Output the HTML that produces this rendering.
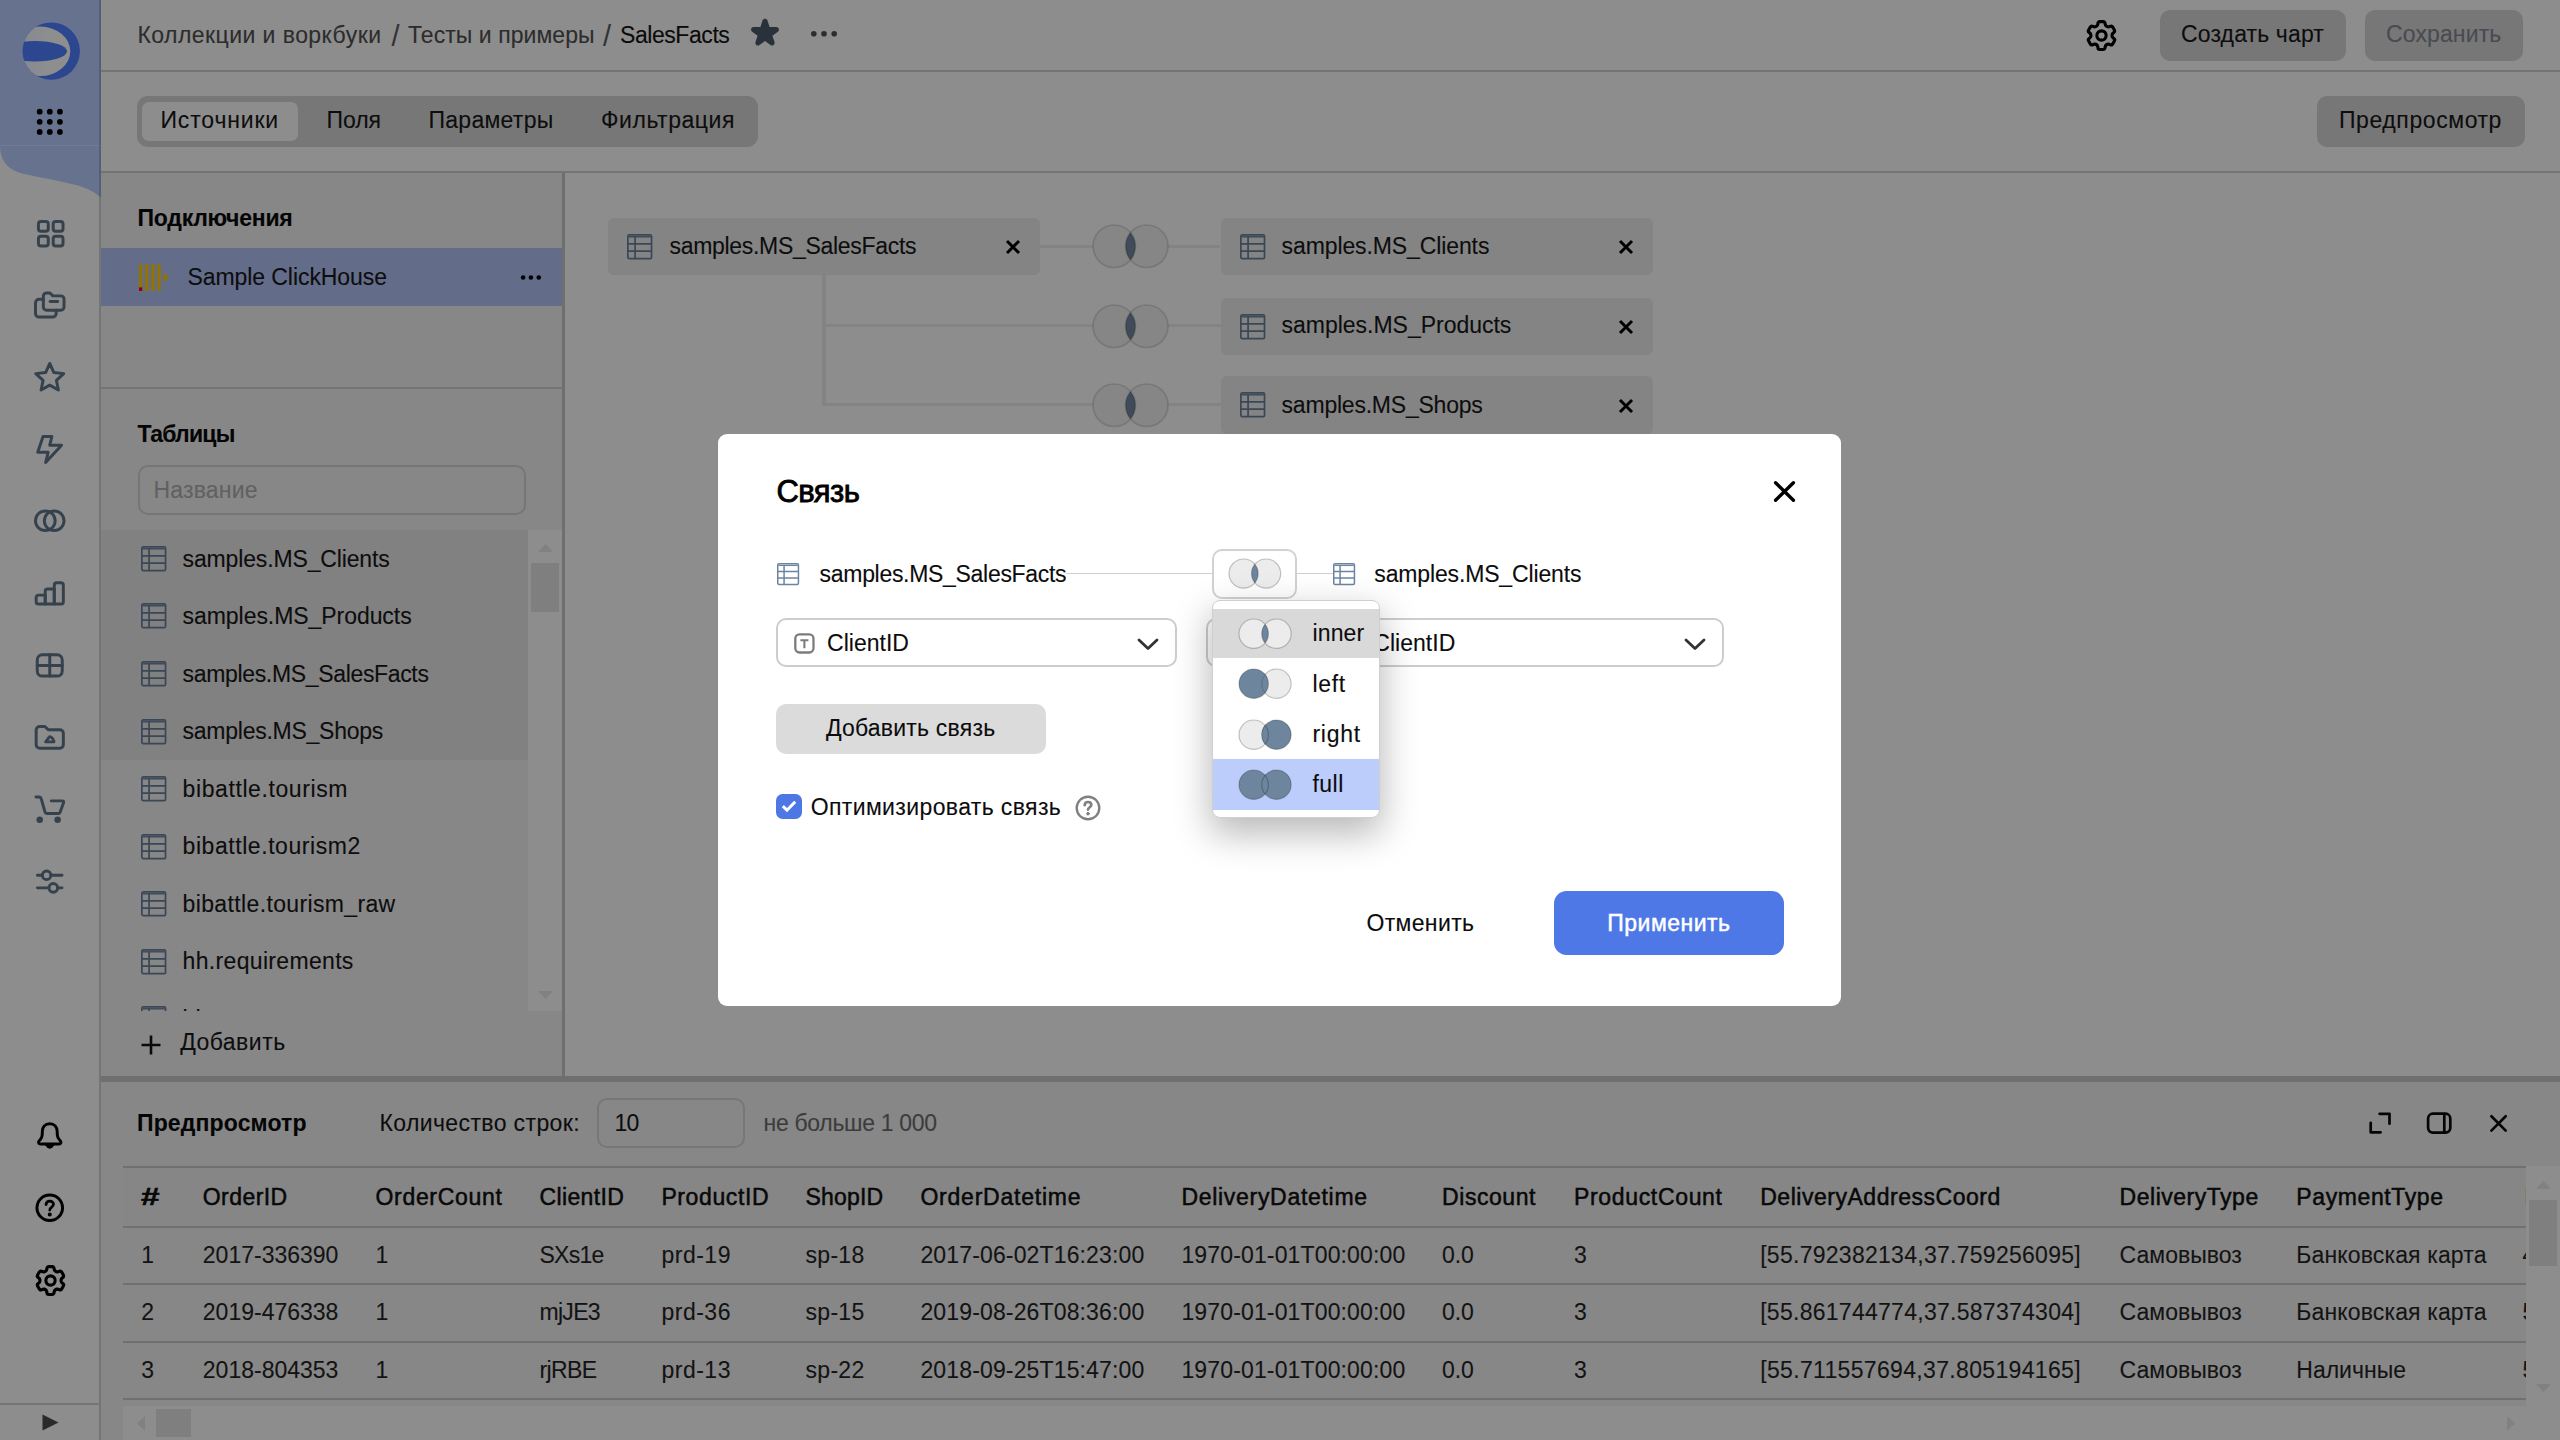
<!DOCTYPE html>
<html lang="ru">
<head>
<meta charset="utf-8">
<title>SalesFacts — Связь</title>
<style>
*{box-sizing:border-box;margin:0;padding:0}
html,body{width:2560px;height:1440px;overflow:hidden;background:#8d8d8d}
body{font-family:"Liberation Sans",sans-serif;font-size:23px;color:#0d0d0d;position:relative}
.abs{position:absolute}
.t{position:absolute;white-space:nowrap;line-height:30px;height:30px;-webkit-text-stroke:.1px currentColor}
.b{font-weight:700}
.m{-webkit-text-stroke:.5px currentColor}
.m2{-webkit-text-stroke:.85px currentColor}
.m3{-webkit-text-stroke:.45px currentColor}
svg{display:block;overflow:visible}
.ic{position:absolute;width:31.5px;height:31.5px;color:#35424d}
.ic svg{width:31.5px;height:31.5px;fill:none;stroke:currentColor;stroke-width:1.5;stroke-linecap:round;stroke-linejoin:round}
/* aside */
.aside{left:0;top:0;width:101px;height:1440px;background:#8d8d8d}
.aside-line{left:99px;top:0;width:2px;height:1440px;background:rgba(0,0,0,.17)}
.hline{position:absolute;background:#747474;height:2px}
</style>
</head>
<body>

<!-- ===== ASIDE ===== -->
<div class="abs aside">
  <svg class="abs" style="left:0;top:0" width="101" height="200" viewBox="0 0 101 200">
    <path d="M0 0H101V197.6C95 192.6 88 188.6 78 185.6C60 180.8 40 177.4 22 173.4C8 170 .6 161 0 147Z" fill="#67738e"/>
    <rect x="0" y="145" width="101" height="1" fill="#707c96"/>
    <defs><linearGradient id="lg" x1="0" y1="0" x2="1" y2="0"><stop offset="0" stop-color="#838895"/><stop offset="0.7" stop-color="#8e8e8e"/></linearGradient><clipPath id="lc"><circle cx="51.25" cy="51.1" r="28.7"/></clipPath></defs>
    <circle cx="51.25" cy="51.1" r="28.7" fill="#2c478f"/>
    <g clip-path="url(#lc)"><ellipse cx="40" cy="51.3" rx="30.3" ry="24.8" fill="url(#lg)"/><ellipse cx="35" cy="51.25" rx="32" ry="10.2" fill="#2c478f"/></g>
    <g fill="#000"><circle cx="39.7" cy="111.7" r="2.9"/><circle cx="49.8" cy="111.7" r="2.9"/><circle cx="59.9" cy="111.7" r="2.9"/><circle cx="39.7" cy="121.8" r="2.9"/><circle cx="49.8" cy="121.8" r="2.9"/><circle cx="59.9" cy="121.8" r="2.9"/><circle cx="39.7" cy="131.9" r="2.9"/><circle cx="49.8" cy="131.9" r="2.9"/><circle cx="59.9" cy="131.9" r="2.9"/></g>
  </svg>
    <div class="ic" style="left:34.25px;top:218.25px"><svg viewBox="0 0 16 16"><g transform="translate(.5 0)"><rect x="1.75" y="1.75" width="5" height="5" rx="1.3"/><rect x="9.25" y="1.75" width="5" height="5" rx="1.3"/><rect x="1.75" y="9.25" width="5" height="5" rx="1.3"/><rect x="9.25" y="9.25" width="5" height="5" rx="1.3"/></g></svg></div>
  <div class="ic" style="left:34.25px;top:289.25px"><svg viewBox="0 0 16 16"><path d="M4.75 3.6A1.6 1.6 0 0 1 6.35 2H8.1L9.6 3.5H13.65A1.6 1.6 0 0 1 15.25 5.1V9.15A1.6 1.6 0 0 1 13.65 10.75H6.35A1.6 1.6 0 0 1 4.75 9.15Z"/><path d="M8.2 6.4H12"/><path d="M4.75 5.25H2.6A1.85 1.85 0 0 0 .75 7.1V12.4A1.85 1.85 0 0 0 2.6 14.25H9.4A1.85 1.85 0 0 0 11.25 12.4V10.75"/></svg></div>
  <div class="ic" style="left:34.25px;top:361.25px"><svg viewBox="0 0 16 16"><path d="M8.00 1.25L10.09 5.85L15.10 6.41L11.38 9.82L12.39 14.76L8.00 12.27L3.61 14.76L4.62 9.82L0.90 6.41L5.91 5.85Z"/></svg></div>
  <div class="ic" style="left:34.25px;top:433.25px"><svg viewBox="0 0 16 16"><path d="M4.6 1.75H9.1L8 6.2H14L5.9 15L7.2 9.8H1.9Z"/></svg></div>
  <div class="ic" style="left:34.25px;top:505.25px"><svg viewBox="0 0 16 16"><circle cx="5.75" cy="8" r="5"/><circle cx="10.25" cy="8" r="5"/></svg></div>
  <div class="ic" style="left:34.25px;top:578.25px"><svg viewBox="0 0 16 16"><path d="M2.3 8.7H5.7V13.25H2.3A1.2 1.2 0 0 1 1.1 12.05V9.9A1.2 1.2 0 0 1 2.3 8.7Z"/><path d="M5.7 13.25V6.8A1.2 1.2 0 0 1 6.9 5.6H10.3V13.25Z"/><path d="M10.3 13.25V3.65A1.2 1.2 0 0 1 11.5 2.45H13.7A1.2 1.2 0 0 1 14.9 3.65V12.05A1.2 1.2 0 0 1 13.7 13.25Z"/></svg></div>
  <div class="ic" style="left:34.25px;top:650.25px"><svg viewBox="0 0 16 16"><rect x="1.65" y="2.45" width="12.7" height="10.8" rx="2.6"/><path d="M8 2.45V13.25M1.65 7.85H14.35"/></svg></div>
  <div class="ic" style="left:34.25px;top:722.25px"><svg viewBox="0 0 16 16"><path d="M1.1 4.1A1.8 1.8 0 0 1 2.9 2.3H5.5L7.2 3.9H13.1A1.8 1.8 0 0 1 14.9 5.7V11.55A1.8 1.8 0 0 1 13.1 13.35H2.9A1.8 1.8 0 0 1 1.1 11.55Z"/><path d="M5.9 10.1L7.9 7.4Q9.7 7.8 10.2 10.1Z" stroke-width="1.4"/></svg></div>
  <div class="ic" style="left:34.25px;top:794.25px"><svg viewBox="0 0 16 16"><path d="M1 1.5H2.5Q3.4 1.5 3.65 2.4L5.6 9.2Q5.8 9.9 6.5 9.9H12.3Q13 9.9 13.25 9.3L15 4.4Q15.3 3.5 14.4 3.5H8.8"/><circle cx="2.9" cy="13.1" r="1.2" fill="currentColor" stroke-width=".9"/><circle cx="12" cy="13.1" r="1.2" fill="currentColor" stroke-width=".9"/></svg></div>
  <div class="ic" style="left:34.25px;top:866.25px"><svg viewBox="0 0 16 16"><path d="M1.75 4.7H4.2M8.6 4.7H14.25M1.75 11.1H7.6M12 11.1H14.25"/><circle cx="6.4" cy="4.7" r="2.2"/><circle cx="9.8" cy="11.1" r="2.2"/></svg></div>
  <div class="ic" style="left:34.25px;top:1120.25px;color:#000;width:31.5px;height:31.5px"><svg style="width:31.5px;height:31.5px" viewBox="0 0 16 16"><path d="M8 1.9C5.5 1.9 4.35 3.6 4.25 5.6L4.15 7.7C4.1 8.6 3.7 9.4 3.05 10.1L2.6 10.6C2 11.3 2.4 12.2 3.25 12.2H12.75C13.6 12.2 14 11.3 13.4 10.6L12.95 10.1C12.3 9.4 11.9 8.6 11.85 7.7L11.75 5.6C11.65 3.6 10.5 1.9 8 1.9Z"/><path d="M6.2 12.7Q8 15.6 9.8 12.7Z" fill="currentColor" stroke-width="1"/></svg></div>
  <div class="ic" style="left:34.25px;top:1192.25px;color:#000;width:31.5px;height:31.5px"><svg style="width:31.5px;height:31.5px" viewBox="0 0 16 16"><circle cx="8" cy="8" r="6.5"/><path d="M6.1 6.4C6.2 5.2 7 4.6 8 4.6C9.1 4.6 9.9 5.3 9.9 6.25C9.9 7.7 8 7.6 8 9.2" stroke-width="1.4"/><circle cx="8" cy="11.4" r="0.65" fill="currentColor" stroke-width=".8"/></svg></div>
  <div class="ic" style="left:33.5px;top:1263.5px;color:#000;width:33px;height:33px"><svg style="width:33px;height:33px" viewBox="0 0 16 16"><path stroke="none" fill="currentColor" fill-rule="evenodd" clip-rule="evenodd" d="M7.199 2H8.8a.2.2 0 0 1 .2.2c0 1.808 1.958 2.939 3.524 2.034a.199.199 0 0 1 .271.073l.802 1.388a.199.199 0 0 1-.073.272c-1.566.904-1.566 3.164 0 4.069a.199.199 0 0 1 .073.271l-.802 1.388a.199.199 0 0 1-.271.073C10.958 10.863 9 11.993 9 13.8a.2.2 0 0 1-.199.2H7.2a.199.199 0 0 1-.2-.2c0-1.808-1.958-2.938-3.524-2.034a.199.199 0 0 1-.272-.073l-.8-1.388a.199.199 0 0 1 .072-.271c1.566-.905 1.566-3.165 0-4.07a.199.199 0 0 1-.073-.271l.801-1.388a.199.199 0 0 1 .272-.073C5.042 5.138 7 4.007 7 2.2c0-.11.089-.199.199-.199ZM5.5 2.2c0-.94.76-1.7 1.699-1.7H8.8c.94 0 1.7.76 1.7 1.7a.85.85 0 0 0 1.274.735 1.699 1.699 0 0 1 2.32.622l.802 1.388c.469.813.19 1.851-.622 2.32a.85.85 0 0 0 0 1.472 1.7 1.7 0 0 1 .622 2.32l-.802 1.388a1.699 1.699 0 0 1-2.32.622.85.85 0 0 0-1.274.735c0 .939-.76 1.7-1.699 1.7H7.2a1.7 1.7 0 0 1-1.699-1.7.85.85 0 0 0-1.274-.735 1.698 1.698 0 0 1-2.32-.622l-.802-1.388a1.699 1.699 0 0 1 .622-2.32.85.85 0 0 0 0-1.471 1.699 1.699 0 0 1-.622-2.321l.801-1.388a1.699 1.699 0 0 1 2.32-.622A.85.85 0 0 0 5.5 2.2Zm4 5.8a1.5 1.5 0 1 1-3 0 1.5 1.5 0 0 1 3 0ZM11 8a3 3 0 1 1-6 0 3 3 0 0 1 6 0Z"/></svg></div>
  <div class="abs" style="left:0;top:1403px;width:99px;height:2px;background:#747474"></div>
  <svg class="abs" style="left:42.3px;top:1413.5px" width="17" height="17" viewBox="0 0 17 17"><path d="M.5 .5L16.5 8.5L.5 16.5Z" fill="#2a2a2a"/></svg>
</div>
<div class="abs aside-line"></div>

<!-- ===== TOP BAR ===== -->
<span class="t" style="left:137.5px;top:19.6px;color:#2c2c2c;letter-spacing:0.446px;">Коллекции и воркбуки</span>
<span class="t" style="left:391.6px;top:21.1px;font-size:29px;color:#333;-webkit-text-stroke:0;">/</span>
<span class="t" style="left:408px;top:19.6px;color:#2c2c2c;letter-spacing:0.056px;">Тесты и примеры</span>
<span class="t" style="left:602.9px;top:21.1px;font-size:29px;color:#333;-webkit-text-stroke:0;">/</span>
<span class="t" style="left:620px;top:19.6px;color:#0a0a0a;letter-spacing:-0.437px;">SalesFacts</span>
<svg class="abs" style="left:750.5px;top:18.5px" width="28" height="28" viewBox="0 0 16 16"><path fill="#29323b" d="M6.573.862c.449-1.382 2.405-1.382 2.854 0l1.194 3.674h3.863c1.453 0 2.057 1.86.882 2.714L12.24 9.52l1.194 3.674c.449 1.382-1.133 2.531-2.308 1.677L8 12.601l-3.126 2.271c-1.175.854-2.757-.295-2.308-1.677L3.76 9.521.634 7.25c-1.175-.854-.571-2.714.882-2.714H5.38L6.573.862Z"/></svg>
<svg class="abs" style="left:810px;top:30px" width="28" height="8" viewBox="0 0 28 8" fill="#2d2d2d"><circle cx="3.8" cy="3.8" r="2.8"/><circle cx="14" cy="3.8" r="2.8"/><circle cx="24.2" cy="3.8" r="2.8"/></svg>
<div class="ic" style="left:2084.5px;top:18.7px;color:#000;width:33px;height:33px"><svg style="width:33px;height:33px" viewBox="0 0 16 16"><path stroke="none" fill="currentColor" fill-rule="evenodd" clip-rule="evenodd" d="M7.199 2H8.8a.2.2 0 0 1 .2.2c0 1.808 1.958 2.939 3.524 2.034a.199.199 0 0 1 .271.073l.802 1.388a.199.199 0 0 1-.073.272c-1.566.904-1.566 3.164 0 4.069a.199.199 0 0 1 .073.271l-.802 1.388a.199.199 0 0 1-.271.073C10.958 10.863 9 11.993 9 13.8a.2.2 0 0 1-.199.2H7.2a.199.199 0 0 1-.2-.2c0-1.808-1.958-2.938-3.524-2.034a.199.199 0 0 1-.272-.073l-.8-1.388a.199.199 0 0 1 .072-.271c1.566-.905 1.566-3.165 0-4.07a.199.199 0 0 1-.073-.271l.801-1.388a.199.199 0 0 1 .272-.073C5.042 5.138 7 4.007 7 2.2c0-.11.089-.199.199-.199ZM5.5 2.2c0-.94.76-1.7 1.699-1.7H8.8c.94 0 1.7.76 1.7 1.7a.85.85 0 0 0 1.274.735 1.699 1.699 0 0 1 2.32.622l.802 1.388c.469.813.19 1.851-.622 2.32a.85.85 0 0 0 0 1.472 1.7 1.7 0 0 1 .622 2.32l-.802 1.388a1.699 1.699 0 0 1-2.32.622.85.85 0 0 0-1.274.735c0 .939-.76 1.7-1.699 1.7H7.2a1.7 1.7 0 0 1-1.699-1.7.85.85 0 0 0-1.274-.735 1.698 1.698 0 0 1-2.32-.622l-.802-1.388a1.699 1.699 0 0 1 .622-2.32.85.85 0 0 0 0-1.471 1.699 1.699 0 0 1-.622-2.321l.801-1.388a1.699 1.699 0 0 1 2.32-.622A.85.85 0 0 0 5.5 2.2Zm4 5.8a1.5 1.5 0 1 1-3 0 1.5 1.5 0 0 1 3 0ZM11 8a3 3 0 1 1-6 0 3 3 0 0 1 6 0Z"/></svg></div>
<div class="abs" style="left:2160px;top:10px;width:185.5px;height:50.5px;background:#777777;border-radius:10px;"></div>
<span class="t" style="left:2181px;top:18.9px;letter-spacing:0.133px;">Создать чарт</span>
<div class="abs" style="left:2365px;top:10px;width:158px;height:50.5px;background:#777777;border-radius:10px;"></div>
<span class="t" style="left:2386px;top:18.9px;color:#494b52;letter-spacing:0.123px;">Сохранить</span>
<div class="hline" style="left:101px;top:70px;width:2459px"></div>
<div class="abs" style="left:137px;top:96px;width:621px;height:51px;background:#777777;border-radius:11px;"></div>
<div class="abs" style="left:142px;top:102.3px;width:155.8px;height:38.3px;background:#8d8d8d;border-radius:7px;"></div>
<span class="t" style="left:160.5px;top:105.0px;letter-spacing:0.828px;">Источники</span>
<span class="t" style="left:326.5px;top:105.0px;letter-spacing:-0.051px;">Поля</span>
<span class="t" style="left:428.5px;top:105.0px;letter-spacing:0.266px;">Параметры</span>
<span class="t" style="left:601px;top:105.0px;letter-spacing:0.545px;">Фильтрация</span>
<div class="abs" style="left:2317px;top:96px;width:208px;height:51px;background:#777777;border-radius:10px;"></div>
<span class="t" style="left:2339px;top:104.9px;letter-spacing:0.583px;">Предпросмотр</span>
<div class="hline" style="left:101px;top:171px;width:2459px"></div>

<!-- ===== LEFT PANEL ===== -->
<div class="abs" style="left:101px;top:173px;width:461px;height:903px;background:#878787;"></div>
<div class="abs" style="left:562px;top:173px;width:3px;height:903px;background:#6f6f6f;"></div>
<span class="t b" style="left:137.5px;top:202.9px;color:#050505;letter-spacing:-0.241px;">Подключения</span>
<div class="abs" style="left:101px;top:248px;width:461px;height:57.5px;background:#636d8a;"></div>
<svg class="abs" style="left:138.75px;top:264px" width="29" height="27" viewBox="0 0 29 27"><rect x="0" y="0" width="3.25" height="27" fill="#937300"/><rect x="6.15" y="0" width="3.25" height="27" fill="#937300"/><rect x="12.25" y="0" width="3.25" height="27" fill="#937300"/><rect x="18.45" y="0" width="3.25" height="27" fill="#937300"/><rect x="24.4" y="10.1" width="3.8" height="6.7" fill="#937300"/><rect x="0" y="23.4" width="3.25" height="3.6" fill="#960000"/></svg>
<span class="t" style="left:187.4px;top:261.8px;letter-spacing:-0.065px;">Sample ClickHouse</span>
<svg class="abs" style="left:520px;top:274px" width="22" height="7" viewBox="0 0 22 7" fill="#000"><circle cx="3.1" cy="3.5" r="2.3"/><circle cx="10.9" cy="3.5" r="2.3"/><circle cx="18.75" cy="3.5" r="2.3"/></svg>
<div class="hline" style="left:101px;top:386.5px;width:461px"></div>
<span class="t b" style="left:137.5px;top:418.7px;color:#050505;letter-spacing:-0.777px;">Таблицы</span>
<div class="abs" style="left:138px;top:464.5px;width:388px;height:50px;border-radius:10px;border:2px solid #767676;"></div>
<span class="t" style="left:153.4px;top:474.5px;color:#616161;letter-spacing:0.202px;">Название</span>
<div class="abs" style="left:101px;top:530px;width:427px;height:230px;background:#818181;"></div>
<div class="abs" style="left:528px;top:530px;width:34px;height:481px;background:#8d8d8d;"></div>
<svg class="abs" style="left:537.5px;top:544px" width="15" height="8" viewBox="0 0 15 8"><path d="M0 8L7.5 0L15 8Z" fill="#818181"/></svg>
<div class="abs" style="left:531px;top:563px;width:28px;height:48.7px;background:#7f7f7f;"></div>
<svg class="abs" style="left:537.5px;top:991px" width="15" height="8" viewBox="0 0 15 8"><path d="M0 0L7.5 8L15 0Z" fill="#818181"/></svg>
<svg class="abs" style="left:140.8px;top:545.9px" width="25.4" height="25.4" viewBox="0 0 25.4 25.4" fill="none" stroke="#3a4757" stroke-width="1.7"><rect x="0.85" y="0.85" width="23.7" height="23.7" rx="1.4" stroke-width="1.7"/><path d="M1.6 2.8H23.8" stroke-width="1.4"/><path d="M1 9.8H24.4M1 17.1H24.4M8.1 2.8V24.4"/></svg>
<span class="t" style="left:182.6px;top:543.6px;letter-spacing:-0.147px;">samples.MS_Clients</span>
<svg class="abs" style="left:140.8px;top:603.4px" width="25.4" height="25.4" viewBox="0 0 25.4 25.4" fill="none" stroke="#3a4757" stroke-width="1.7"><rect x="0.85" y="0.85" width="23.7" height="23.7" rx="1.4" stroke-width="1.7"/><path d="M1.6 2.8H23.8" stroke-width="1.4"/><path d="M1 9.8H24.4M1 17.1H24.4M8.1 2.8V24.4"/></svg>
<span class="t" style="left:182.6px;top:601.1px;letter-spacing:-0.058px;">samples.MS_Products</span>
<svg class="abs" style="left:140.8px;top:661.0px" width="25.4" height="25.4" viewBox="0 0 25.4 25.4" fill="none" stroke="#3a4757" stroke-width="1.7"><rect x="0.85" y="0.85" width="23.7" height="23.7" rx="1.4" stroke-width="1.7"/><path d="M1.6 2.8H23.8" stroke-width="1.4"/><path d="M1 9.8H24.4M1 17.1H24.4M8.1 2.8V24.4"/></svg>
<span class="t" style="left:182.6px;top:658.7px;letter-spacing:-0.338px;">samples.MS_SalesFacts</span>
<svg class="abs" style="left:140.8px;top:718.6px" width="25.4" height="25.4" viewBox="0 0 25.4 25.4" fill="none" stroke="#3a4757" stroke-width="1.7"><rect x="0.85" y="0.85" width="23.7" height="23.7" rx="1.4" stroke-width="1.7"/><path d="M1.6 2.8H23.8" stroke-width="1.4"/><path d="M1 9.8H24.4M1 17.1H24.4M8.1 2.8V24.4"/></svg>
<span class="t" style="left:182.6px;top:716.2px;letter-spacing:-0.259px;">samples.MS_Shops</span>
<svg class="abs" style="left:140.8px;top:776.1px" width="25.4" height="25.4" viewBox="0 0 25.4 25.4" fill="none" stroke="#3a4757" stroke-width="1.7"><rect x="0.85" y="0.85" width="23.7" height="23.7" rx="1.4" stroke-width="1.7"/><path d="M1.6 2.8H23.8" stroke-width="1.4"/><path d="M1 9.8H24.4M1 17.1H24.4M8.1 2.8V24.4"/></svg>
<span class="t" style="left:182.6px;top:773.8px;letter-spacing:0.589px;">bibattle.tourism</span>
<svg class="abs" style="left:140.8px;top:833.7px" width="25.4" height="25.4" viewBox="0 0 25.4 25.4" fill="none" stroke="#3a4757" stroke-width="1.7"><rect x="0.85" y="0.85" width="23.7" height="23.7" rx="1.4" stroke-width="1.7"/><path d="M1.6 2.8H23.8" stroke-width="1.4"/><path d="M1 9.8H24.4M1 17.1H24.4M8.1 2.8V24.4"/></svg>
<span class="t" style="left:182.6px;top:831.3px;letter-spacing:0.556px;">bibattle.tourism2</span>
<svg class="abs" style="left:140.8px;top:891.2px" width="25.4" height="25.4" viewBox="0 0 25.4 25.4" fill="none" stroke="#3a4757" stroke-width="1.7"><rect x="0.85" y="0.85" width="23.7" height="23.7" rx="1.4" stroke-width="1.7"/><path d="M1.6 2.8H23.8" stroke-width="1.4"/><path d="M1 9.8H24.4M1 17.1H24.4M8.1 2.8V24.4"/></svg>
<span class="t" style="left:182.6px;top:888.9px;letter-spacing:0.359px;">bibattle.tourism_raw</span>
<svg class="abs" style="left:140.8px;top:948.7px" width="25.4" height="25.4" viewBox="0 0 25.4 25.4" fill="none" stroke="#3a4757" stroke-width="1.7"><rect x="0.85" y="0.85" width="23.7" height="23.7" rx="1.4" stroke-width="1.7"/><path d="M1.6 2.8H23.8" stroke-width="1.4"/><path d="M1 9.8H24.4M1 17.1H24.4M8.1 2.8V24.4"/></svg>
<span class="t" style="left:182.6px;top:946.4px;letter-spacing:0.326px;">hh.requirements</span>
<div class="abs" style="left:102px;top:1000px;width:426px;height:11px;overflow:hidden"><svg class="abs" style="left:38.8px;top:6.3px" width="25.4" height="25.4" viewBox="0 0 25.4 25.4" fill="none" stroke="#3a4757" stroke-width="1.7"><rect x="0.85" y="0.85" width="23.7" height="23.7" rx="1.4" stroke-width="1.7"/><path d="M1.6 2.8H23.8" stroke-width="1.4"/><path d="M1 9.8H24.4M1 17.1H24.4M8.1 2.8V24.4"/></svg><span class="t" style="left:80.6px;top:4.4px">hh.resume</span></div>
<svg class="abs" style="left:141px;top:1035px" width="20" height="20" viewBox="0 0 20 20" stroke="#0a0a0a" stroke-width="2.6"><path d="M10 0.5V19.5M0.5 10H19.5"/></svg>
<span class="t" style="left:180.2px;top:1027.4px;letter-spacing:0.468px;">Добавить</span>

<!-- ===== CANVAS ===== -->
<div class="abs" style="left:1040px;top:244.7px;width:180px;height:3.4px;background:#838383;"></div>
<div class="abs" style="left:822.4px;top:275px;width:3.4px;height:131.4px;background:#838383;"></div>
<div class="abs" style="left:822.5px;top:323.8px;width:398px;height:3.4px;background:#838383;"></div>
<div class="abs" style="left:822.5px;top:403px;width:398px;height:3.4px;background:#838383;"></div>
<div class="abs" style="left:608px;top:217.5px;width:432px;height:57.5px;background:#848484;border-radius:6px;"></div>
<svg class="abs" style="left:627.1px;top:233.5px" width="25.4" height="25.4" viewBox="0 0 25.4 25.4" fill="none" stroke="#3a4757" stroke-width="1.7"><rect x="0.85" y="0.85" width="23.7" height="23.7" rx="1.4" stroke-width="1.7"/><path d="M1.6 2.8H23.8" stroke-width="1.4"/><path d="M1 9.8H24.4M1 17.1H24.4M8.1 2.8V24.4"/></svg>
<span class="t" style="left:669.5px;top:231.4px;letter-spacing:-0.304px;">samples.MS_SalesFacts</span>
<svg class="abs" style="left:1006px;top:240px" width="14" height="14" viewBox="0 0 14 14" fill="none" stroke="#000" stroke-width="3"><path d="M1 1L13 13M13 1L1 13"/></svg>
<svg class="abs" style="left:1090.5px;top:223.0px" width="79.0" height="46.5" viewBox="0 0 79.0 46.5"><defs><clipPath id="cv0"><circle cx="23.25" cy="23.25" r="21.25"/></clipPath></defs><circle cx="23.25" cy="23.25" r="21.25" fill="#868686"/><circle cx="55.75" cy="23.25" r="21.25" fill="#868686"/><circle cx="55.75" cy="23.25" r="21.25" fill="#3f4b58" clip-path="url(#cv0)"/><circle cx="23.25" cy="23.25" r="21.25" fill="none" stroke="rgba(0,0,0,.13)" stroke-width="1.7"/><circle cx="55.75" cy="23.25" r="21.25" fill="none" stroke="rgba(0,0,0,.13)" stroke-width="1.7"/></svg>
<div class="abs" style="left:1220.5px;top:217.5px;width:432.3px;height:57.5px;background:#848484;border-radius:6px;"></div>
<svg class="abs" style="left:1239.9px;top:233.5px" width="25.4" height="25.4" viewBox="0 0 25.4 25.4" fill="none" stroke="#3a4757" stroke-width="1.7"><rect x="0.85" y="0.85" width="23.7" height="23.7" rx="1.4" stroke-width="1.7"/><path d="M1.6 2.8H23.8" stroke-width="1.4"/><path d="M1 9.8H24.4M1 17.1H24.4M8.1 2.8V24.4"/></svg>
<span class="t" style="left:1281.6px;top:231.4px;letter-spacing:-0.108px;">samples.MS_Clients</span>
<svg class="abs" style="left:1619px;top:240.0px" width="14" height="14" viewBox="0 0 14 14" fill="none" stroke="#000" stroke-width="3"><path d="M1 1L13 13M13 1L1 13"/></svg>
<svg class="abs" style="left:1090.5px;top:303.1px" width="79.0" height="46.5" viewBox="0 0 79.0 46.5"><defs><clipPath id="cv1"><circle cx="23.25" cy="23.25" r="21.25"/></clipPath></defs><circle cx="23.25" cy="23.25" r="21.25" fill="#868686"/><circle cx="55.75" cy="23.25" r="21.25" fill="#868686"/><circle cx="55.75" cy="23.25" r="21.25" fill="#3f4b58" clip-path="url(#cv1)"/><circle cx="23.25" cy="23.25" r="21.25" fill="none" stroke="rgba(0,0,0,.13)" stroke-width="1.7"/><circle cx="55.75" cy="23.25" r="21.25" fill="none" stroke="rgba(0,0,0,.13)" stroke-width="1.7"/></svg>
<div class="abs" style="left:1220.5px;top:297.6px;width:432.3px;height:57.5px;background:#848484;border-radius:6px;"></div>
<svg class="abs" style="left:1239.9px;top:313.6px" width="25.4" height="25.4" viewBox="0 0 25.4 25.4" fill="none" stroke="#3a4757" stroke-width="1.7"><rect x="0.85" y="0.85" width="23.7" height="23.7" rx="1.4" stroke-width="1.7"/><path d="M1.6 2.8H23.8" stroke-width="1.4"/><path d="M1 9.8H24.4M1 17.1H24.4M8.1 2.8V24.4"/></svg>
<span class="t" style="left:1281.6px;top:309.9px;letter-spacing:-0.021px;">samples.MS_Products</span>
<svg class="abs" style="left:1619px;top:320.1px" width="14" height="14" viewBox="0 0 14 14" fill="none" stroke="#000" stroke-width="3"><path d="M1 1L13 13M13 1L1 13"/></svg>
<svg class="abs" style="left:1090.5px;top:381.6px" width="79.0" height="46.5" viewBox="0 0 79.0 46.5"><defs><clipPath id="cv2"><circle cx="23.25" cy="23.25" r="21.25"/></clipPath></defs><circle cx="23.25" cy="23.25" r="21.25" fill="#868686"/><circle cx="55.75" cy="23.25" r="21.25" fill="#868686"/><circle cx="55.75" cy="23.25" r="21.25" fill="#3f4b58" clip-path="url(#cv2)"/><circle cx="23.25" cy="23.25" r="21.25" fill="none" stroke="rgba(0,0,0,.13)" stroke-width="1.7"/><circle cx="55.75" cy="23.25" r="21.25" fill="none" stroke="rgba(0,0,0,.13)" stroke-width="1.7"/></svg>
<div class="abs" style="left:1220.5px;top:376.1px;width:432.3px;height:57.5px;background:#848484;border-radius:6px;"></div>
<svg class="abs" style="left:1239.9px;top:392.1px" width="25.4" height="25.4" viewBox="0 0 25.4 25.4" fill="none" stroke="#3a4757" stroke-width="1.7"><rect x="0.85" y="0.85" width="23.7" height="23.7" rx="1.4" stroke-width="1.7"/><path d="M1.6 2.8H23.8" stroke-width="1.4"/><path d="M1 9.8H24.4M1 17.1H24.4M8.1 2.8V24.4"/></svg>
<span class="t" style="left:1281.6px;top:389.9px;letter-spacing:-0.222px;">samples.MS_Shops</span>
<svg class="abs" style="left:1619px;top:398.6px" width="14" height="14" viewBox="0 0 14 14" fill="none" stroke="#000" stroke-width="3"><path d="M1 1L13 13M13 1L1 13"/></svg>

<!-- ===== PREVIEW ===== -->
<div class="abs" style="left:101px;top:1076px;width:2459px;height:6px;background:#6f6f6f;"></div>
<div class="abs" style="left:101px;top:1082px;width:2459px;height:358px;background:#878787;"></div>
<span class="t b" style="left:137px;top:1108.4px;color:#050505;letter-spacing:0.146px;">Предпросмотр</span>
<span class="t" style="left:379.5px;top:1108.4px;letter-spacing:0.383px;">Количество строк:</span>
<div class="abs" style="left:597px;top:1098px;width:148px;height:50px;border-radius:10px;border:2px solid #777;"></div>
<span class="t" style="left:614.4px;top:1108.4px;letter-spacing:-0.647px;">10</span>
<span class="t" style="left:763.5px;top:1108.4px;color:#3c3c3c;letter-spacing:-0.309px;">не больше 1 000</span>
<svg class="abs" style="left:2360px;top:1105px" width="160" height="36" viewBox="2360 1105 160 36" fill="none" stroke="#050505" stroke-width="2.7" stroke-linecap="round" stroke-linejoin="round"><path d="M2379.6 1113.8H2389.5V1123.7M2370.7 1122.9V1132.3H2380.6"/><rect x="2428.1" y="1113.7" width="22.2" height="18.9" rx="4.8"/><path d="M2444.3 1114V1132.3" stroke-linecap="butt"/><path d="M2491.4 1116.3L2505.7 1130.6M2505.7 1116.3L2491.4 1130.6"/></svg>
<div class="abs" style="left:123px;top:1166px;width:2403px;height:240px;overflow:hidden"><div class="abs" style="left:0px;top:0px;width:2403px;height:60px;background:#868686;"></div>
<div class="abs" style="left:0px;top:0px;width:2403px;height:2px;background:#707070;"></div>
<div class="abs" style="left:0px;top:60px;width:2403px;height:2px;background:#707070;"></div>
<div class="abs" style="left:0px;top:117px;width:2403px;height:2px;background:#707070;"></div>
<div class="abs" style="left:0px;top:174.5px;width:2403px;height:2px;background:#707070;"></div>
<div class="abs" style="left:0px;top:232px;width:2403px;height:2px;background:#707070;"></div>
<span class="t m" style="left:18.3px;top:16.3px;color:#080808;display:inline-block;transform:scaleX(1.45);transform-origin:0 50%;font-weight:700;">#</span>
<span class="t m" style="left:79.8px;top:16.3px;color:#080808;letter-spacing:0.429px;">OrderID</span>
<span class="t m" style="left:252.5px;top:16.3px;color:#080808;letter-spacing:0.683px;">OrderCount</span>
<span class="t m" style="left:416.5px;top:16.3px;color:#080808;letter-spacing:0.373px;">ClientID</span>
<span class="t m" style="left:538.4px;top:16.3px;color:#080808;letter-spacing:0.604px;">ProductID</span>
<span class="t m" style="left:682.6px;top:16.3px;color:#080808;letter-spacing:0.164px;">ShopID</span>
<span class="t m" style="left:797.4px;top:16.3px;color:#080808;letter-spacing:0.782px;">OrderDatetime</span>
<span class="t m" style="left:1058.4px;top:16.3px;color:#080808;letter-spacing:0.706px;">DeliveryDatetime</span>
<span class="t m" style="left:1319.1px;top:16.3px;color:#080808;letter-spacing:0.539px;">Discount</span>
<span class="t m" style="left:1451px;top:16.3px;color:#080808;letter-spacing:0.663px;">ProductCount</span>
<span class="t m" style="left:1637.2px;top:16.3px;color:#080808;letter-spacing:0.525px;">DeliveryAddressCoord</span>
<span class="t m" style="left:1996.6px;top:16.3px;color:#080808;letter-spacing:0.514px;">DeliveryType</span>
<span class="t m" style="left:2173.3px;top:16.3px;color:#080808;letter-spacing:0.605px;">PaymentType</span>
<span class="t m" style="left:2401.6px;top:16.3px;color:#080808;">PaymentSum</span>
<span class="t" style="left:18.3px;top:73.5px;color:#131313;">1</span>
<span class="t" style="left:79.8px;top:73.5px;color:#131313;letter-spacing:0.002px;">2017-336390</span>
<span class="t" style="left:252.5px;top:73.5px;color:#131313;">1</span>
<span class="t" style="left:416.5px;top:73.5px;color:#131313;letter-spacing:-0.753px;">SXs1e</span>
<span class="t" style="left:538.4px;top:73.5px;color:#131313;letter-spacing:0.519px;">prd-19</span>
<span class="t" style="left:682.6px;top:73.5px;color:#131313;letter-spacing:0.271px;">sp-18</span>
<span class="t" style="left:797.4px;top:73.5px;color:#131313;letter-spacing:0.146px;">2017-06-02T16:23:00</span>
<span class="t" style="left:1058.4px;top:73.5px;color:#131313;letter-spacing:0.146px;">1970-01-01T00:00:00</span>
<span class="t" style="left:1319.1px;top:73.5px;color:#131313;letter-spacing:-0.095px;">0.0</span>
<span class="t" style="left:1451px;top:73.5px;color:#131313;">3</span>
<span class="t" style="left:1637.2px;top:73.5px;color:#131313;letter-spacing:0.275px;">[55.792382134,37.759256095]</span>
<span class="t" style="left:1996.6px;top:73.5px;color:#131313;letter-spacing:0.026px;">Самовывоз</span>
<span class="t" style="left:2173.3px;top:73.5px;color:#131313;letter-spacing:0.139px;">Банковская карта</span>
<span class="t" style="left:2399.4px;top:73.5px;color:#131313;">4100</span>
<span class="t" style="left:18.3px;top:131.1px;color:#131313;">2</span>
<span class="t" style="left:79.8px;top:131.1px;color:#131313;letter-spacing:0.002px;">2019-476338</span>
<span class="t" style="left:252.5px;top:131.1px;color:#131313;">1</span>
<span class="t" style="left:416.5px;top:131.1px;color:#131313;letter-spacing:-0.701px;">mjJE3</span>
<span class="t" style="left:538.4px;top:131.1px;color:#131313;letter-spacing:0.519px;">prd-36</span>
<span class="t" style="left:682.6px;top:131.1px;color:#131313;letter-spacing:0.271px;">sp-15</span>
<span class="t" style="left:797.4px;top:131.1px;color:#131313;letter-spacing:0.146px;">2019-08-26T08:36:00</span>
<span class="t" style="left:1058.4px;top:131.1px;color:#131313;letter-spacing:0.146px;">1970-01-01T00:00:00</span>
<span class="t" style="left:1319.1px;top:131.1px;color:#131313;letter-spacing:-0.095px;">0.0</span>
<span class="t" style="left:1451px;top:131.1px;color:#131313;">3</span>
<span class="t" style="left:1637.2px;top:131.1px;color:#131313;letter-spacing:0.275px;">[55.861744774,37.587374304]</span>
<span class="t" style="left:1996.6px;top:131.1px;color:#131313;letter-spacing:0.026px;">Самовывоз</span>
<span class="t" style="left:2173.3px;top:131.1px;color:#131313;letter-spacing:0.139px;">Банковская карта</span>
<span class="t" style="left:2399.4px;top:131.1px;color:#131313;">5400</span>
<span class="t" style="left:18.3px;top:188.7px;color:#131313;">3</span>
<span class="t" style="left:79.8px;top:188.7px;color:#131313;letter-spacing:0.002px;">2018-804353</span>
<span class="t" style="left:252.5px;top:188.7px;color:#131313;">1</span>
<span class="t" style="left:416.5px;top:188.7px;color:#131313;letter-spacing:-0.633px;">rjRBE</span>
<span class="t" style="left:538.4px;top:188.7px;color:#131313;letter-spacing:0.519px;">prd-13</span>
<span class="t" style="left:682.6px;top:188.7px;color:#131313;letter-spacing:0.271px;">sp-22</span>
<span class="t" style="left:797.4px;top:188.7px;color:#131313;letter-spacing:0.146px;">2018-09-25T15:47:00</span>
<span class="t" style="left:1058.4px;top:188.7px;color:#131313;letter-spacing:0.146px;">1970-01-01T00:00:00</span>
<span class="t" style="left:1319.1px;top:188.7px;color:#131313;letter-spacing:-0.095px;">0.0</span>
<span class="t" style="left:1451px;top:188.7px;color:#131313;">3</span>
<span class="t" style="left:1637.2px;top:188.7px;color:#131313;letter-spacing:0.338px;">[55.711557694,37.805194165]</span>
<span class="t" style="left:1996.6px;top:188.7px;color:#131313;letter-spacing:0.026px;">Самовывоз</span>
<span class="t" style="left:2173.3px;top:188.7px;color:#131313;letter-spacing:0.002px;">Наличные</span>
<span class="t" style="left:2399.4px;top:188.7px;color:#131313;">5100</span></div>
<div class="abs" style="left:2526px;top:1166px;width:34px;height:240px;background:#8d8d8d;"></div>
<svg class="abs" style="left:2535.5px;top:1181px" width="15" height="8" viewBox="0 0 15 8"><path d="M0 8L7.5 0L15 8Z" fill="#818181"/></svg>
<div class="abs" style="left:2529px;top:1199.5px;width:28px;height:66.5px;background:#7f7f7f;"></div>
<svg class="abs" style="left:2535.5px;top:1383.5px" width="15" height="8" viewBox="0 0 15 8"><path d="M0 0L7.5 8L15 0Z" fill="#818181"/></svg>
<div class="abs" style="left:123px;top:1406px;width:2437px;height:34px;background:#8d8d8d;"></div>
<svg class="abs" style="left:136.5px;top:1415.5px" width="8" height="15" viewBox="0 0 8 15"><path d="M8 0L0 7.5L8 15Z" fill="#818181"/></svg>
<div class="abs" style="left:156px;top:1409px;width:34.5px;height:28px;background:#7f7f7f;"></div>
<svg class="abs" style="left:2506.5px;top:1416px" width="8" height="15" viewBox="0 0 8 15"><path d="M0 0L8 7.5L0 15Z" fill="#818181"/></svg>

<!-- ===== MODAL ===== -->
<div class="abs" style="left:718.3px;top:433.8px;width:1123px;height:571.8px;background:#ffffff;border-radius:9px;"></div>
<span class="t m2" style="left:776.6px;top:476.6px;font-size:31px;color:#000;letter-spacing:-0.614px;">Связь</span>
<svg class="abs" style="left:1772px;top:479px" width="25" height="25" viewBox="0 0 25 25" fill="none" stroke="#000" stroke-width="3.4" stroke-linecap="round"><path d="M3.6 3.8L21.4 21.3M21.4 3.8L3.6 21.3"/></svg>
<svg class="abs" style="left:777.3px;top:563.0px" width="22.2" height="22.2" viewBox="0 0 25.4 25.4" fill="none" stroke="#6b84a2" stroke-width="1.7"><rect x="0.85" y="0.85" width="23.7" height="23.7" rx="1.4" stroke-width="1.7"/><path d="M1.6 2.8H23.8" stroke-width="1.4"/><path d="M1 9.8H24.4M1 17.1H24.4M8.1 2.8V24.4"/></svg>
<span class="t" style="left:819.6px;top:559.4px;color:#0c0c0c;letter-spacing:-0.304px;">samples.MS_SalesFacts</span>
<div class="abs" style="left:1066px;top:572.5px;width:266.5px;height:1.6px;background:#cfcfcf;"></div>
<div class="abs" style="left:1211.8px;top:549.3px;width:85.4px;height:49.3px;background:#fff;border-radius:10px;border:2px solid #d2d2d2;"></div>
<svg class="abs" style="left:1227.4px;top:556.6999999999999px" width="55.7" height="33.2" viewBox="0 0 55.7 33.2"><defs><clipPath id="mv0"><circle cx="16.59999999999991" cy="16.6" r="14.6"/></clipPath></defs><circle cx="16.59999999999991" cy="16.6" r="14.6" fill="#ececec"/><circle cx="39.09999999999991" cy="16.6" r="14.6" fill="#ececec"/><circle cx="39.09999999999991" cy="16.6" r="14.6" fill="#6d869e" clip-path="url(#mv0)"/><circle cx="16.59999999999991" cy="16.6" r="14.6" fill="none" stroke="rgba(0,0,0,.22)" stroke-width="1.2"/><circle cx="39.09999999999991" cy="16.6" r="14.6" fill="none" stroke="rgba(0,0,0,.22)" stroke-width="1.2"/></svg>
<svg class="abs" style="left:1332.6px;top:563.0px" width="22.2" height="22.2" viewBox="0 0 25.4 25.4" fill="none" stroke="#6b84a2" stroke-width="1.7"><rect x="0.85" y="0.85" width="23.7" height="23.7" rx="1.4" stroke-width="1.7"/><path d="M1.6 2.8H23.8" stroke-width="1.4"/><path d="M1 9.8H24.4M1 17.1H24.4M8.1 2.8V24.4"/></svg>
<span class="t" style="left:1374.3px;top:559.4px;color:#0c0c0c;letter-spacing:-0.147px;">samples.MS_Clients</span>
<div class="abs" style="left:776.2px;top:617.9px;width:401px;height:49px;background:#fff;border-radius:10px;border:2px solid #cdcdcd;"></div>
<svg class="abs" style="left:794.3px;top:632.5px" width="21" height="21" viewBox="0 0 21 21" fill="none" stroke="#7c7c7c"><rect x="1.3" y="1.3" width="18.2" height="18.2" rx="4.2" stroke-width="2.3"/><path d="M6.4 7.2H14.4M10.4 7.2V15.2" stroke-width="2.1"/></svg>
<span class="t" style="left:827px;top:628.0px;color:#0c0c0c;letter-spacing:0.023px;">ClientID</span>
<svg class="abs" style="left:1136.5px;top:637.8px" width="22" height="13" viewBox="0 0 22 13" fill="none" stroke="#333" stroke-width="2.8" stroke-linejoin="round" stroke-linecap="round"><path d="M2 2L11 10.6L20 2"/></svg>
<div class="abs" style="left:1206.3px;top:617.9px;width:88px;height:49px;background:#fff;border-radius:10px;border:2px solid #cdcdcd;"></div>
<span class="t" style="left:1241px;top:628.0px;color:#0c0c0c;">=</span>
<div class="abs" style="left:1323.2px;top:617.9px;width:401px;height:49px;background:#fff;border-radius:10px;border:2px solid #cdcdcd;"></div>
<svg class="abs" style="left:1341.3px;top:632.5px" width="21" height="21" viewBox="0 0 21 21" fill="none" stroke="#7c7c7c"><rect x="1.3" y="1.3" width="18.2" height="18.2" rx="4.2" stroke-width="2.3"/><path d="M6.4 7.2H14.4M10.4 7.2V15.2" stroke-width="2.1"/></svg>
<span class="t" style="left:1373.3px;top:628.0px;color:#0c0c0c;letter-spacing:0.023px;">ClientID</span>
<svg class="abs" style="left:1683.7px;top:637.8px" width="22" height="13" viewBox="0 0 22 13" fill="none" stroke="#333" stroke-width="2.8" stroke-linejoin="round" stroke-linecap="round"><path d="M2 2L11 10.6L20 2"/></svg>
<div class="abs" style="left:776px;top:704px;width:270.2px;height:49.5px;background:#dbdbdb;border-radius:10px;"></div>
<span class="t" style="left:825.9px;top:712.6px;color:#0c0c0c;letter-spacing:0.215px;">Добавить связь</span>
<div class="abs" style="left:776px;top:793.8px;width:25.6px;height:25.4px;background:#4c77e4;border-radius:6.5px;"></div>
<svg class="abs" style="left:781px;top:800px" width="16" height="13" viewBox="0 0 16 13" fill="none" stroke="#fff" stroke-width="3"><path d="M1.8 6.2L6 10.2L14.2 1.8"/></svg>
<span class="t" style="left:810.7px;top:792.3px;color:#0c0c0c;letter-spacing:0.377px;">Оптимизировать связь</span>
<svg class="abs" style="left:1075px;top:795px" width="26" height="26" viewBox="0 0 26 26" fill="none" stroke="#808080" stroke-width="2.4" stroke-linecap="round"><circle cx="13" cy="13" r="11.3"/><path d="M9.7 10.2C9.8 8.1 11.3 7 13 7C14.9 7 16.3 8.2 16.3 9.9C16.3 12.3 13 12.2 13 14.6" stroke-width="2.7"/><circle cx="13" cy="18.7" r="1.3" fill="#808080" stroke-width="1"/></svg>
<span class="t" style="left:1366.4px;top:907.9px;color:#0c0c0c;letter-spacing:0.361px;">Отменить</span>
<div class="abs" style="left:1553.5px;top:891px;width:230.5px;height:64px;background:#4d78e6;border-radius:12.5px;"></div>
<span class="t m3" style="left:1607.3px;top:907.9px;color:#fff;letter-spacing:0.484px;">Применить</span>
<div class="abs" style="left:1212px;top:600px;width:168px;height:218px;background:#fff;border-radius:8px;border:1px solid #cfcfcf;box-shadow:0 14px 36px 2px rgba(0,0,0,.28);"></div>
<div class="abs" style="left:1213px;top:609px;width:166px;height:49.3px;background:#d9d9d9;"></div>
<div class="abs" style="left:1213px;top:759.3px;width:166px;height:50.7px;background:#bccdfb;"></div>
<svg class="abs" style="left:1237.05px;top:617.05px" width="56.15" height="33.4" viewBox="0 0 56.15 33.4"><defs><clipPath id="pv0"><circle cx="16.700000000000045" cy="16.7" r="14.7"/></clipPath></defs><circle cx="16.700000000000045" cy="16.7" r="14.7" fill="#ececec"/><circle cx="39.450000000000045" cy="16.7" r="14.7" fill="#ececec"/><circle cx="39.450000000000045" cy="16.7" r="14.7" fill="#6d869e" clip-path="url(#pv0)"/><circle cx="16.700000000000045" cy="16.7" r="14.7" fill="none" stroke="rgba(0,0,0,.22)" stroke-width="1.2"/><circle cx="39.450000000000045" cy="16.7" r="14.7" fill="none" stroke="rgba(0,0,0,.22)" stroke-width="1.2"/></svg>
<svg class="abs" style="left:1237.05px;top:666.9px" width="56.15" height="33.4" viewBox="0 0 56.15 33.4"><defs><clipPath id="pv1"><circle cx="16.700000000000045" cy="16.7" r="14.7"/></clipPath></defs><circle cx="16.700000000000045" cy="16.7" r="14.7" fill="#6d869e"/><circle cx="39.450000000000045" cy="16.7" r="14.7" fill="#ececec"/><circle cx="39.450000000000045" cy="16.7" r="14.7" fill="#6d869e" clip-path="url(#pv1)"/><circle cx="16.700000000000045" cy="16.7" r="14.7" fill="none" stroke="rgba(0,0,0,.22)" stroke-width="1.2"/><circle cx="39.450000000000045" cy="16.7" r="14.7" fill="none" stroke="rgba(0,0,0,.22)" stroke-width="1.2"/></svg>
<svg class="abs" style="left:1237.05px;top:717.6999999999999px" width="56.15" height="33.4" viewBox="0 0 56.15 33.4"><defs><clipPath id="pv2"><circle cx="16.700000000000045" cy="16.7" r="14.7"/></clipPath></defs><circle cx="16.700000000000045" cy="16.7" r="14.7" fill="#ececec"/><circle cx="39.450000000000045" cy="16.7" r="14.7" fill="#6d869e"/><circle cx="39.450000000000045" cy="16.7" r="14.7" fill="#6d869e" clip-path="url(#pv2)"/><circle cx="16.700000000000045" cy="16.7" r="14.7" fill="none" stroke="rgba(0,0,0,.22)" stroke-width="1.2"/><circle cx="39.450000000000045" cy="16.7" r="14.7" fill="none" stroke="rgba(0,0,0,.22)" stroke-width="1.2"/></svg>
<svg class="abs" style="left:1237.05px;top:767.9px" width="56.15" height="33.4" viewBox="0 0 56.15 33.4"><defs><clipPath id="pv3"><circle cx="16.700000000000045" cy="16.7" r="14.7"/></clipPath></defs><circle cx="16.700000000000045" cy="16.7" r="14.7" fill="#6d869e"/><circle cx="39.450000000000045" cy="16.7" r="14.7" fill="#6d869e"/><circle cx="39.450000000000045" cy="16.7" r="14.7" fill="#6d869e" clip-path="url(#pv3)"/><circle cx="16.700000000000045" cy="16.7" r="14.7" fill="none" stroke="rgba(0,0,0,.22)" stroke-width="1.2"/><circle cx="39.450000000000045" cy="16.7" r="14.7" fill="none" stroke="rgba(0,0,0,.22)" stroke-width="1.2"/></svg>
<span class="t" style="left:1312.5px;top:617.8px;color:#0c0c0c;letter-spacing:0.119px;">inner</span>
<span class="t" style="left:1312.5px;top:668.8px;color:#0c0c0c;letter-spacing:0.641px;">left</span>
<span class="t" style="left:1312.5px;top:719.1px;color:#0c0c0c;letter-spacing:0.700px;">right</span>
<span class="t" style="left:1312.5px;top:769.4px;color:#0c0c0c;letter-spacing:0.461px;">full</span>

</body>
</html>
